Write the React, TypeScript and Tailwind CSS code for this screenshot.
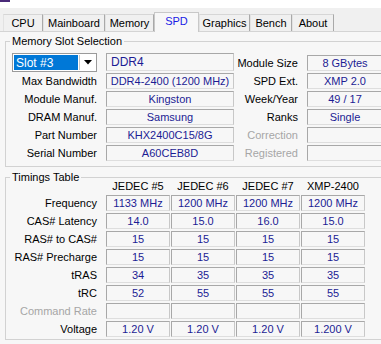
import React from "react";

const tabs: { name: string; cls: string; sel?: boolean }[] = [
  { name: "CPU", cls: "w-[40px]" },
  { name: "Mainboard", cls: "w-[62px]" },
  { name: "Memory", cls: "w-[49px]" },
  { name: "SPD", cls: "w-[45px]", sel: true },
  { name: "Graphics", cls: "w-[51px]" },
  { name: "Bench", cls: "w-[42px]" },
  { name: "About", cls: "w-[42px]" },
];

const fieldBase =
  "border border-[#a8a8a8] border-b-[#dedede] border-r-[#c8c8c8] flex items-center text-[#1c1c94] leading-none whitespace-nowrap";

function Field({ children, className = "" }: { children?: React.ReactNode; className?: string }) {
  return <div className={`${fieldBase} ${className}`}>{children}</div>;
}

const topRows: { l: string; v: string; rl: string; rv: string; grey?: boolean }[] = [
  { l: "Max Bandwidth", v: "DDR4-2400 (1200 MHz)", rl: "SPD Ext.", rv: "XMP 2.0" },
  { l: "Module Manuf.", v: "Kingston", rl: "Week/Year", rv: "49 / 17" },
  { l: "DRAM Manuf.", v: "Samsung", rl: "Ranks", rv: "Single" },
  { l: "Part Number", v: "KHX2400C15/8G", rl: "Correction", rv: "", grey: true },
  { l: "Serial Number", v: "A60CEB8D", rl: "Registered", rv: "", grey: true },
];

const timingRows: { l: string; v: string[]; grey?: boolean }[] = [
  { l: "Frequency", v: ["1133 MHz", "1200 MHz", "1200 MHz", "1200 MHz"] },
  { l: "CAS# Latency", v: ["14.0", "15.0", "16.0", "15.0"] },
  { l: "RAS# to CAS#", v: ["15", "15", "15", "15"] },
  { l: "RAS# Precharge", v: ["15", "15", "15", "15"] },
  { l: "tRAS", v: ["34", "35", "35", "35"] },
  { l: "tRC", v: ["52", "55", "55", "55"] },
  { l: "Command Rate", v: ["", "", "", ""], grey: true },
  { l: "Voltage", v: ["1.20 V", "1.20 V", "1.20 V", "1.200 V"] },
];

const headers = ["JEDEC #5", "JEDEC #6", "JEDEC #7", "XMP-2400"];

export default function App() {
  return (
    <div className="w-[381px] h-[344px] overflow-hidden bg-[#f0f0f0] font-['Liberation_Sans',Arial,sans-serif] text-[11px] text-black leading-none">
      <div className="h-[8px] bg-white">
        <div className="w-[10px] h-[2px] bg-[#4a2a78]" />
      </div>
      <div className="h-[23px] flex items-end pl-[3px]">
        {tabs.map((t) =>
          t.sel ? (
            <div
              key={t.name}
              className={`${t.cls} h-[20px] -mb-[1px] relative z-10 bg-[#f7f7f7] border border-b-0 border-[#c8c8c8] flex items-center justify-center pb-[3px] text-[#1a1ae6]`}
            >
              {t.name}
            </div>
          ) : (
            <div
              key={t.name}
              className={`${t.cls} h-[17px] bg-[#f0f0f0] border border-b-0 border-l-[#e2e2e2] border-t-[#d6d6d6] border-r-[#a9a9a9] flex items-center justify-center pt-[1px]`}
            >
              {t.name}
            </div>
          )
        )}
      </div>
      <div className="h-[313px] border-t border-[#d4d4d4] bg-[#f7f7f7] pl-[5px] pt-[3px]">
        <fieldset className="w-[400px] h-[132px] border border-[#d2d2d2]">
          <legend className="ml-[4px] px-[2px] leading-[13px]">Memory Slot Selection</legend>
          <div className="pt-[5px] flex flex-col">
            <div className="flex h-[19px] items-start">
              <div className="ml-[6px] w-[85px] h-[19px] border border-[#9a9a9a] bg-white flex p-[1px]">
                <div className="flex-1 bg-[#0078d7] text-white text-[12px] flex items-center pl-[2px]">Slot #3</div>
                <div className="w-[16px] ml-[1px] border-l border-[#c8c8c8] flex items-center justify-center">
                  <svg width="8" height="5" viewBox="0 0 8 5">
                    <path d="M0 0 H8 L4 4.5 Z" fill="#000" />
                  </svg>
                </div>
              </div>
              <Field className="ml-[9px] w-[128px] h-[18px] pl-[4px] text-[12px]">DDR4</Field>
              <div className="w-[64px] h-[18px] flex items-center justify-end pt-[3px]">Module Size</div>
              <Field className="ml-[9px] w-[76px] h-[16px] mt-[2px] justify-center">8 GBytes</Field>
            </div>
            <div className="flex flex-col gap-[2px] mt-[1px]">
              {topRows.map((r) => (
                <div key={r.l} className="flex h-[16px]">
                  <div className="w-[91px] flex items-center justify-end">{r.l}</div>
                  <Field className="ml-[9px] w-[128px] justify-center">{r.v}</Field>
                  <div className={`w-[64px] flex items-center justify-end ${r.grey ? "text-[#a6a6a6]" : ""}`}>{r.rl}</div>
                  <Field className="ml-[9px] w-[76px] justify-center">{r.rv}</Field>
                </div>
              ))}
            </div>
          </div>
        </fieldset>
        <fieldset className="mt-[4px] w-[400px] h-[169px] border border-[#d2d2d2]">
          <legend className="ml-[4px] px-[2px] leading-[13px]">Timings Table</legend>
          <div className="-mt-[4px] flex h-[12px] items-center pl-[100px] gap-[1px]">
            {headers.map((h) => (
              <div key={h} className="w-[64px] text-center">
                {h}
              </div>
            ))}
          </div>
          <div className="mt-[3px] flex flex-col gap-[2px]">
            {timingRows.map((r) => (
              <div key={r.l} className="flex h-[16px]">
                <div className={`w-[91px] flex items-center justify-end ${r.grey ? "text-[#a6a6a6]" : ""}`}>{r.l}</div>
                <div className="ml-[9px] flex gap-[1px]">
                  {r.v.map((v, i) => (
                    <Field key={i} className="w-[64px] h-[16px] justify-center">
                      {v}
                    </Field>
                  ))}
                </div>
              </div>
            ))}
          </div>
        </fieldset>
      </div>
    </div>
  );
}
